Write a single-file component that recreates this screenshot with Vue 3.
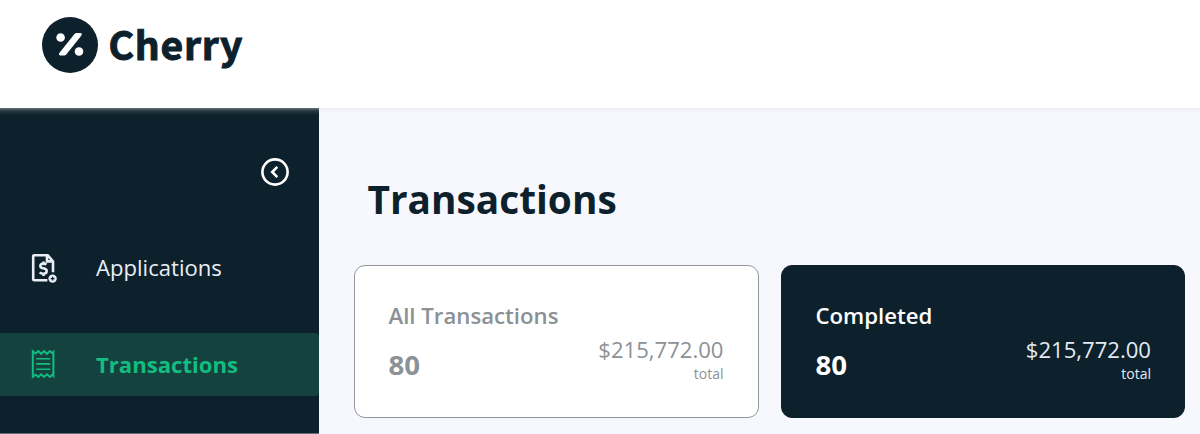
<template>
  <div class="page">
    <header class="header">
      <svg class="logo-mark" viewBox="0 0 56 56">
        <circle cx="28" cy="28" r="28" />
        <path d="M18.6 38.4h3.5q1.3 0 2.2-1l14.9-18.6q1.6-2.4-1-2.7h-3.5q-1.3 0-2.2 1L17.5 35.7q-1.5 2.4 1.1 2.7z" />
        <circle class="dot" cx="18.6" cy="20.5" r="4.3" />
        <circle class="dot" cx="37" cy="34.5" r="4.3" />
      </svg>
      <span class="logo-text">Cherry</span>
    </header>

    <div class="body">
      <aside class="sidebar">
        <button class="collapse" aria-label="Collapse">
          <svg viewBox="0 0 28 28">
            <circle cx="14" cy="14" r="12.6" />
            <path d="M16.3 8.8 11.2 14l5.1 5.2" />
          </svg>
        </button>

        <nav class="nav">
          <a class="nav-item">
            <svg class="nav-icon" viewBox="0 0 28 32">
              <path class="bold" d="M17.4 28.3H4.2q-1 0-1-1V4.2q0-1 1-1h13.5l5.3 6.2v10.8M17 3.2v6.2h6" />
              <path class="bold" d="M16.4 12.7q-1.1-1.1-3.1-1.1-3 0-3 2.3 0 1.8 3 2.4 3.4.6 3.4 2.8 0 2.6-3.3 2.6-2.5 0-3.7-1.3M13.5 9.4v2M13.5 21.7v2.4" />
              <circle class="badge" cx="22.6" cy="26.6" r="4.2" />
              <path class="plus" d="M20.7 26.6h3.8M22.6 24.7v3.8" />
            </svg>
            <span>Applications</span>
          </a>
          <a class="nav-item active">
            <svg class="nav-icon" viewBox="0 0 28 32">
              <path d="M2.8 3.2v25.7l2.9-2.1 2.6 2.1 2.9-2.6 2.9 2.6 2.9-2.6 2.9 2.6 2.4-2.1 1.1 1.2V4l-1.1 1.2-2.4-2.1L17 5.8l-2.9-2.7-2.9 2.7-2.9-2.7-2.6 2.4z" />
              <path class="lines" d="M6.2 10.7h14M6.2 15.9h14M6.2 21.3h14" />
            </svg>
            <span>Transactions</span>
          </a>
        </nav>
      </aside>

      <main class="main">
        <h1 class="title">Transactions</h1>
        <div class="cards">
          <section v-for="card in cards" :key="card.label" class="card" :class="{ dark: card.selected }">
            <div class="label">{{ card.label }}</div>
            <div class="stats">
              <span class="count">{{ card.count }}</span>
              <div class="sum">
                <span class="amount">{{ card.amount }}</span>
                <span class="total">total</span>
              </div>
            </div>
          </section>
        </div>
      </main>
    </div>
  </div>
</template>

<script setup>
const cards = [
  { label: 'All Transactions', count: 80, amount: '$215,772.00', selected: false },
  { label: 'Completed', count: 80, amount: '$215,772.00', selected: true },
];
</script>

<style>
body {
  margin: 0;
  overflow: hidden;
}
</style>

<style scoped>
.page {
  display: flex;
  flex-direction: column;
  height: 434px;
  background: #f7f8fd;
  color: #0d212d;
  font-family: "Open Sans", "Noto Sans", sans-serif;
}

.header {
  display: flex;
  align-items: flex-start;
  flex: none;
  box-sizing: border-box;
  height: 108px;
  padding: 16.5px 0 0 41.5px;
  background: #fff;
}

.logo-mark {
  width: 56px;
  height: 56px;
  fill: #0d212d;
}

.logo-mark path,
.logo-mark .dot {
  fill: #fff;
}

.logo-text {
  margin: -2px 0 0 11px;
  font: 700 39px/56px "Noto Sans CJK JP", "Open Sans", sans-serif;
  letter-spacing: 0.75px;
  -webkit-text-stroke: 1px #0d212d;
}

.body {
  display: flex;
  flex: 1;
  min-height: 0;
}

.sidebar {
  flex: none;
  box-sizing: border-box;
  width: 319px;
  border-bottom: 1px solid #647079;
  background: linear-gradient(#66727a, #26373f 3px, #0d212d 7px);
}

.collapse {
  display: block;
  width: 28px;
  height: 28px;
  margin: 50px 30.5px 0 auto;
  padding: 0;
  border: 0;
  background: none;
}

.collapse svg {
  display: block;
  fill: none;
  stroke: #fff;
  stroke-width: 2.6;
}

.nav {
  display: flex;
  flex-direction: column;
  gap: 33px;
  margin-top: 50px;
}

.nav-item {
  display: flex;
  align-items: center;
  height: 63.6px;
  padding-left: 30px;
  border-radius: 0 4px 4px 0;
  color: #e9eef5;
  font-size: 22.1px;
}

.nav-item span {
  margin: -1px 0 0 38px;
}

.nav-item.active {
  background: #13423f;
  color: #13bd80;
  font-weight: 700;
}

.nav-icon {
  width: 28px;
  height: 32px;
  fill: none;
  stroke: currentColor;
  stroke-width: 2;
}

.bold {
  stroke-width: 2.6;
}

.badge {
  fill: currentColor;
  stroke: none;
}

.plus {
  stroke: #0d212d;
  stroke-width: 1.3;
}

.lines {
  stroke-width: 1.6;
}

.main {
  flex: 1;
  padding: 0 15px 0 35px;
  background: linear-gradient(#efeff2, #f7f8fd 5px);
}

.title {
  margin: 64px 0 0 13.5px;
  font-size: 38.8px;
  line-height: 54px;
}

.cards {
  display: grid;
  grid-template-columns: 1fr 1fr;
  gap: 22px;
  margin-top: 39px;
}

.card {
  box-sizing: border-box;
  height: 153px;
  padding: 35px 34px 0 33.5px;
  border: 1.5px solid #92989c;
  border-radius: 11px;
  background: #fff;
  color: #8b9195;
}

.card.dark {
  padding-right: 33px;
  padding-left: 34px;
  border-color: #0d212d;
  background: #0d212d;
  color: #fff;
}

.label {
  font-size: 22.2px;
  font-weight: 600;
  line-height: 30px;
}

.stats {
  display: flex;
  justify-content: space-between;
}

.count {
  margin-top: 13.5px;
  font-size: 27.6px;
  font-weight: 700;
  line-height: 38px;
}

.sum {
  display: flex;
  flex-direction: column;
  align-items: flex-end;
  margin-top: 3px;
}

.amount {
  font-size: 22.1px;
  line-height: 30px;
}

.total {
  margin-top: 1px;
  font-size: 14px;
  line-height: 18px;
}

.dark .amount,
.dark .total {
  color: #e3ebf2;
}
</style>
